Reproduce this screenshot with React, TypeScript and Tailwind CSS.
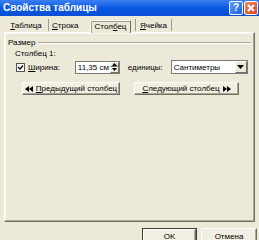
import { ReactNode } from "react"

function ClassicButton({ children, className = "", isDefault = false }: { children: ReactNode; className?: string; isDefault?: boolean }) {
    return (
        <div className={`${isDefault ? "border border-[#3c3c3c]" : ""} ${className}`}>
            <div className="h-full w-full flex items-center justify-center bg-[#F1EFE2] border-t border-l border-t-white border-l-white border-r border-b border-r-[#716F64] border-b-[#716F64] shadow-[inset_-1px_-1px_0_#ACA899]">
                {children}
            </div>
        </div>
    )
}

function DoubleArrow({ dir }: { dir: "left" | "right" }) {
    return (
        <svg width="8" height="6" viewBox="0 0 8 6" className="shrink-0">
            {dir === "left" ? (
                <>
                    <path d="M0 3 L4 0 L4 6 Z" fill="#000" />
                    <path d="M4 3 L8 0 L8 6 Z" fill="#000" />
                </>
            ) : (
                <>
                    <path d="M0 0 L4 3 L0 6 Z" fill="#000" />
                    <path d="M4 0 L8 3 L4 6 Z" fill="#000" />
                </>
            )}
        </svg>
    )
}

export default function App() {
    return (
        <div className="w-[259px] h-[240px] overflow-hidden bg-[#ECE9D8] flex flex-col font-['Liberation_Sans',Arial,sans-serif] text-[8px] leading-[11px] text-black whitespace-nowrap">
            {/* Title bar */}
            <div className="h-[16px] shrink-0 flex items-center justify-between pl-[3px] pr-[1px] bg-gradient-to-b from-[#3a80f3] via-[#0858e0] to-[#0a4fd4]">
                <span className="text-white font-bold text-[10px] leading-[12px]">Свойства таблицы</span>
                <div className="flex gap-[1px]">
                    <div className="w-[14px] h-[14px] rounded-[2px] border border-white bg-gradient-to-br from-[#5a9cff] to-[#1f5ee8] flex items-center justify-center text-white font-bold text-[10px] leading-none">?</div>
                    <div className="w-[14px] h-[14px] rounded-[2px] border border-white bg-gradient-to-br from-[#f08a66] to-[#d2431c] flex items-center justify-center">
                        <svg width="8" height="8" viewBox="0 0 8 8">
                            <path d="M1 1 L7 7 M7 1 L1 7" stroke="#fff" strokeWidth="1.8" />
                        </svg>
                    </div>
                </div>
            </div>

            {/* Tabs */}
            <div className="h-[16px] shrink-0 flex items-end pl-[4px] relative z-10">
                <div className="w-[44px] h-[12px] flex items-center justify-center mb-[1px]">
                    <span><u>Т</u>аблица</span>
                </div>
                <div className="w-[1px] h-[12px] bg-[#9d9b8e] mb-[1px]" />
                <div className="w-[41px] h-[12px] flex items-center pl-[3px] mb-[1px]">
                    <span><u>С</u>трока</span>
                </div>
                <div className="w-[41px] h-[13px] -mb-[1px] flex items-center justify-center bg-[#ECE9D8] border-t border-l border-t-white border-l-white border-r border-r-[#716F64] pb-[1px] shadow-[inset_1px_1px_0_#9d9b8e]">
                    <span>Стол<u>б</u>ец</span>
                </div>
                <div className="w-[1px] h-[12px] bg-[#9d9b8e] ml-[4px] mb-[1px]" />
                <div className="w-[35px] h-[12px] flex items-center pl-[4px] mb-[1px]">
                    <span><u>Я</u>чейка</span>
                </div>
                <div className="w-[1px] h-[12px] bg-[#9d9b8e] mb-[1px]" />
            </div>

            {/* Panel */}
            <div className="ml-[4px] w-[251px] h-[190px] shrink-0 flex flex-col border-t border-l border-t-white border-l-white border-r border-b border-r-[#716F64] border-b-[#716F64] shadow-[inset_-1px_-1px_0_#ACA899,inset_1px_1px_0_#f7f6ef]">
                <div className="mt-[4px] pl-[3px] flex items-center gap-[2px] pr-[3px]">
                    <span>Размер</span>
                    <div className="flex-1 h-[2px] border-t border-t-[#ACA899] border-b border-b-white" />
                </div>
                <div className="pl-[10px]">Столбец 1:</div>
                <div className="mt-[1px] h-[14px] flex items-center">
                    <div className="ml-[11px] w-[9px] h-[9px] border border-[#555] bg-white flex items-center justify-center">
                        <svg width="7" height="7" viewBox="0 0 7 7">
                            <path d="M1 3 L3 5 L6 1.5" stroke="#111" strokeWidth="1.4" fill="none" />
                        </svg>
                    </div>
                    <span className="ml-[3px]"><u>Ш</u>ирина:</span>
                    <div className="ml-[15px] w-[45px] h-[13px] border border-[#7a7a7a] bg-white flex items-center">
                        <span className="pl-[2px] flex-1 overflow-hidden">11,35 см</span>
                        <div className="w-[9px] h-full flex flex-col shrink-0">
                            <div className="flex-1 bg-[#ECE9D8] border border-t-white border-l-white border-r-[#716F64] border-b-[#716F64] flex items-center justify-center">
                                <svg width="5" height="3" viewBox="0 0 5 3"><path d="M0 3 L2.5 0 L5 3 Z" fill="#000" /></svg>
                            </div>
                            <div className="flex-1 bg-[#ECE9D8] border border-t-white border-l-white border-r-[#716F64] border-b-[#716F64] flex items-center justify-center">
                                <svg width="5" height="3" viewBox="0 0 5 3"><path d="M0 0 L5 0 L2.5 3 Z" fill="#000" /></svg>
                            </div>
                        </div>
                    </div>
                    <span className="ml-[8px]">единицы:</span>
                    <div className="ml-[8px] w-[77px] h-[14px] border border-[#7a7a7a] bg-white flex items-center">
                        <span className="pl-[2px] flex-1">Сантиметры</span>
                        <div className="w-[12px] h-full bg-[#ECE9D8] border border-t-white border-l-white border-r-[#716F64] border-b-[#716F64] flex items-center justify-center">
                            <svg width="7" height="4" viewBox="0 0 7 4"><path d="M0 0 L7 0 L3.5 4 Z" fill="#000" /></svg>
                        </div>
                    </div>
                </div>
                <div className="mt-[8px] flex">
                    <ClassicButton className="ml-[17px] w-[98px] h-[13px]">
                        <div className="flex items-center gap-[3px]">
                            <DoubleArrow dir="left" />
                            <span><u>П</u>редыдущий столбец</span>
                        </div>
                    </ClassicButton>
                    <ClassicButton className="ml-[14px] w-[105px] h-[13px]">
                        <div className="flex items-center gap-[3px]">
                            <span><u>С</u>ледующий столбец</span>
                            <DoubleArrow dir="right" />
                        </div>
                    </ClassicButton>
                </div>
            </div>

            {/* Bottom buttons */}
            <div className="mt-[6px] flex">
                <ClassicButton isDefault className="ml-[142px] w-[55px] h-[17px]">
                    <span>OK</span>
                </ClassicButton>
                <ClassicButton className="ml-[4px] w-[56px] h-[17px]">
                    <span>Отмена</span>
                </ClassicButton>
            </div>
        </div>
    )
}
